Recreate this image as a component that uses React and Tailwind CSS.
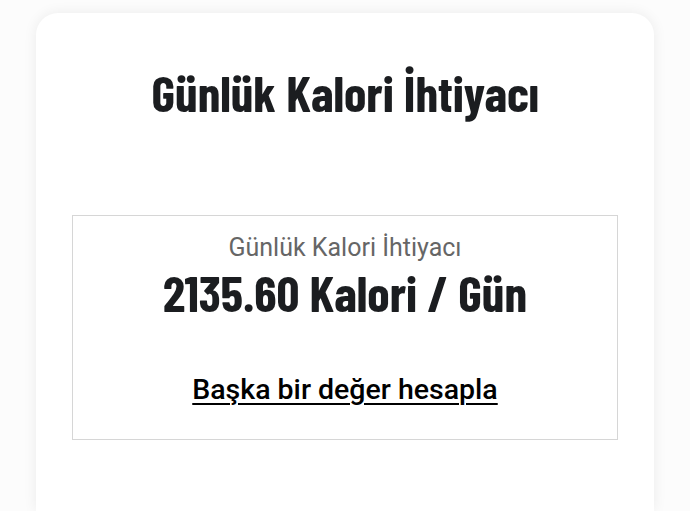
const barlow = { fontFamily: '"Barlow Condensed", "Roboto Condensed", "DejaVu Sans Condensed", sans-serif' };
const roboto = { fontFamily: 'Roboto, "Noto Sans", "Liberation Sans", sans-serif' };

function ResultBox() {
  return (
    <div className="mx-[36px] border border-[#d6d6d6] pt-[17px] pb-[32px] text-center">
      <p style={roboto} className="text-[25px] leading-[30px] text-[#666666]">
        Günlük Kalori İhtiyacı
      </p>
      <p style={barlow} className="text-[50.5px] leading-[58px] font-bold text-[#1b1d20]">
        2135.60 Kalori / Gün
      </p>
      <a
        href="#"
        style={roboto}
        className="mt-[52px] inline-block text-[28.5px] leading-[34px] font-medium text-black underline decoration-2 underline-offset-[4px]"
      >
        Başka bir değer hesapla
      </a>
    </div>
  );
}

export default function App() {
  return (
    <div className="h-screen overflow-hidden bg-[#fcfcfc] pt-[13px]">
      <div className="mx-[36px] h-[498px] rounded-t-[22px] bg-white pt-[49px] shadow-[0_0_14px_rgba(0,0,0,0.07)]">
        <h1 style={barlow} className="text-center text-[50.5px] leading-[60px] font-bold text-[#1b1d20]">
          Günlük Kalori İhtiyacı
        </h1>
        <div className="mt-[93px]">
          <ResultBox />
        </div>
      </div>
    </div>
  );
}
